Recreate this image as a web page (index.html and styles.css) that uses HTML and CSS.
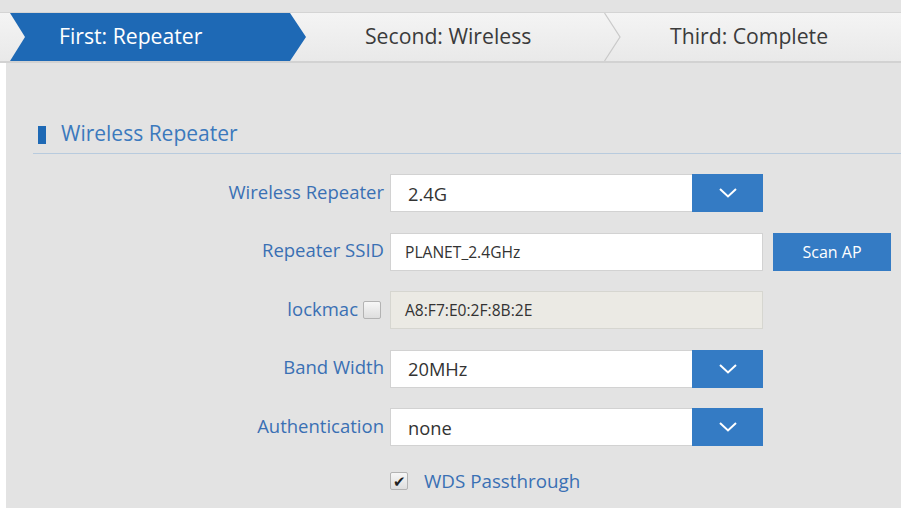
FILE: index.html
```html
<!DOCTYPE html>
<html lang="en">
<head>
<meta charset="utf-8">
<title>Repeater Wizard</title>
<link rel="stylesheet" href="styles.css">
</head>
<body>
<div class="page">
  <div class="steps">
    <div class="step step-active">First: Repeater</div>
    <div class="step step-second">Second: Wireless</div>
    <svg class="step-sep" width="17" height="48" viewBox="0 0 17 48"><polyline points="0.5,0 16,24 0.5,48" fill="none" stroke="#c9c9c9" stroke-width="1.2"/></svg>
    <div class="step step-third">Third: Complete</div>
  </div>

  <div class="content">
    <h2 class="section-title"><span class="mark"></span>Wireless Repeater</h2>

    <div class="form">
      <div class="row">
        <span class="label">Wireless Repeater</span>
        <div class="field select">
          <span class="value">2.4G</span>
          <span class="select-btn"><svg width="18" height="10" viewBox="0 0 18 10"><polyline points="1,1 9,8.5 17,1" fill="none" stroke="#fff" stroke-width="2"/></svg></span>
        </div>
      </div>

      <div class="row">
        <span class="label">Repeater SSID</span>
        <div class="field input"><span class="value value-sm">PLANET_2.4GHz</span></div>
        <button class="btn">Scan AP</button>
      </div>

      <div class="row">
        <span class="label">lockmac<span class="check"></span></span>
        <div class="field input input-disabled"><span class="value value-sm">A8:F7:E0:2F:8B:2E</span></div>
      </div>

      <div class="row">
        <span class="label">Band Width</span>
        <div class="field select">
          <span class="value">20MHz</span>
          <span class="select-btn"><svg width="18" height="10" viewBox="0 0 18 10"><polyline points="1,1 9,8.5 17,1" fill="none" stroke="#fff" stroke-width="2"/></svg></span>
        </div>
      </div>

      <div class="row">
        <span class="label">Authentication</span>
        <div class="field select">
          <span class="value">none</span>
          <span class="select-btn"><svg width="18" height="10" viewBox="0 0 18 10"><polyline points="1,1 9,8.5 17,1" fill="none" stroke="#fff" stroke-width="2"/></svg></span>
        </div>
      </div>

      <div class="row row-option">
        <span class="label"></span>
        <span class="check check-on">&#10004;</span>
        <span class="option-text">WDS Passthrough</span>
      </div>
    </div>
  </div>
</div>
</body>
</html>
```

FILE: styles.css
```css
html, body {
  margin: 0;
  padding: 0;
}

body {
  background: #e3e3e3;
  font-family: "Open Sans", "Noto Sans", sans-serif;
  color: #333;
  width: 901px;
  height: 508px;
  overflow: hidden;
}

.page {
  padding-top: 12px;
}

/* wizard step bar */
.steps {
  display: flex;
  align-items: center;
  height: 48px;
  border-top: 1px solid #d4d4d4;
  border-bottom: 2px solid #d2d2d2;
  background: linear-gradient(#f4f4f4, #e9e9e9);
}

.step {
  height: 48px;
  display: flex;
  align-items: center;
  padding-bottom: 4px;
  font-size: 21.2px;
  color: #3b3b3b;
  box-sizing: border-box;
}

.step-active {
  margin-left: 10px;
  width: 296px;
  padding-left: 49px;
  color: #fff;
  background: #1e69b5;
  clip-path: polygon(0 0, 280px 0, 296px 50%, 280px 100%, 0 100%, 15px 50%);
}

.step-second {
  width: 298px;
  padding-left: 59px;
}

.step-sep {
  display: block;
  flex: none;
}

.step-third {
  padding-left: 49px;
}

/* page body */
.content {
  border-left: 6px solid #fff;
  height: 445px;
  box-sizing: border-box;
  padding: 55px 0 0 27px;
}

.section-title {
  margin: 0;
  display: flex;
  align-items: center;
  height: 30px;
  padding-left: 5px;
  padding-bottom: 5px;
  border-bottom: 1px solid #b8cbde;
  font-weight: normal;
  font-size: 21px;
  color: #3b79bd;
}

.mark {
  width: 8px;
  height: 18px;
  background: #1e69b5;
  margin-right: 15px;
  margin-top: 3px;
}

.form {
  padding-top: 20px;
  display: flex;
  flex-direction: column;
  gap: 20.5px;
}

.row {
  display: flex;
  align-items: center;
  height: 38px;
}

.label {
  width: 357px;
  flex: none;
  display: flex;
  justify-content: flex-end;
  align-items: center;
  padding-right: 6px;
  box-sizing: border-box;
  margin-top: -4px;
  font-size: 18.5px;
  color: #3a70b4;
}

.field {
  width: 373px;
  height: 38px;
  box-sizing: border-box;
  border: 1px solid #d2d2d2;
  background: #fff;
  display: flex;
  align-items: center;
}

.value {
  padding-left: 17px;
  font-size: 18.3px;
  color: #333;
  flex: 1;
}

.value-sm {
  padding-left: 14px;
  font-size: 15.6px;
}

.select-btn {
  width: 71px;
  height: 38px;
  margin: -1px -1px -1px 0;
  background: #347bc4;
  display: flex;
  align-items: center;
  justify-content: center;
}

.select-btn svg {
  display: block;
}

.input-disabled {
  background: #ebeae4;
  border-color: #d6d6d0;
}

.btn {
  margin-left: 10px;
  width: 118px;
  height: 38px;
  border: 0;
  background: #347bc4;
  color: #fff;
  font-family: inherit;
  font-size: 16px;
  padding: 0;
}

/* checkboxes */
.check {
  width: 16px;
  height: 16px;
  border: 1px solid #b3b3b3;
  border-radius: 2px;
  background: linear-gradient(#f7f7f7, #dedede);
  margin-left: 5px;
  margin-right: 3px;
  margin-top: 4px;
  box-sizing: content-box;
  display: inline-flex;
  align-items: center;
  justify-content: center;
}

.row-option {
  margin-top: -4.5px;
}

.row-option .check {
  margin: 0;
  font-size: 15px;
  line-height: 1;
  color: #222;
}

.option-text {
  margin-left: 16px;
  font-size: 18.8px;
  color: #3a70b4;
}
```
